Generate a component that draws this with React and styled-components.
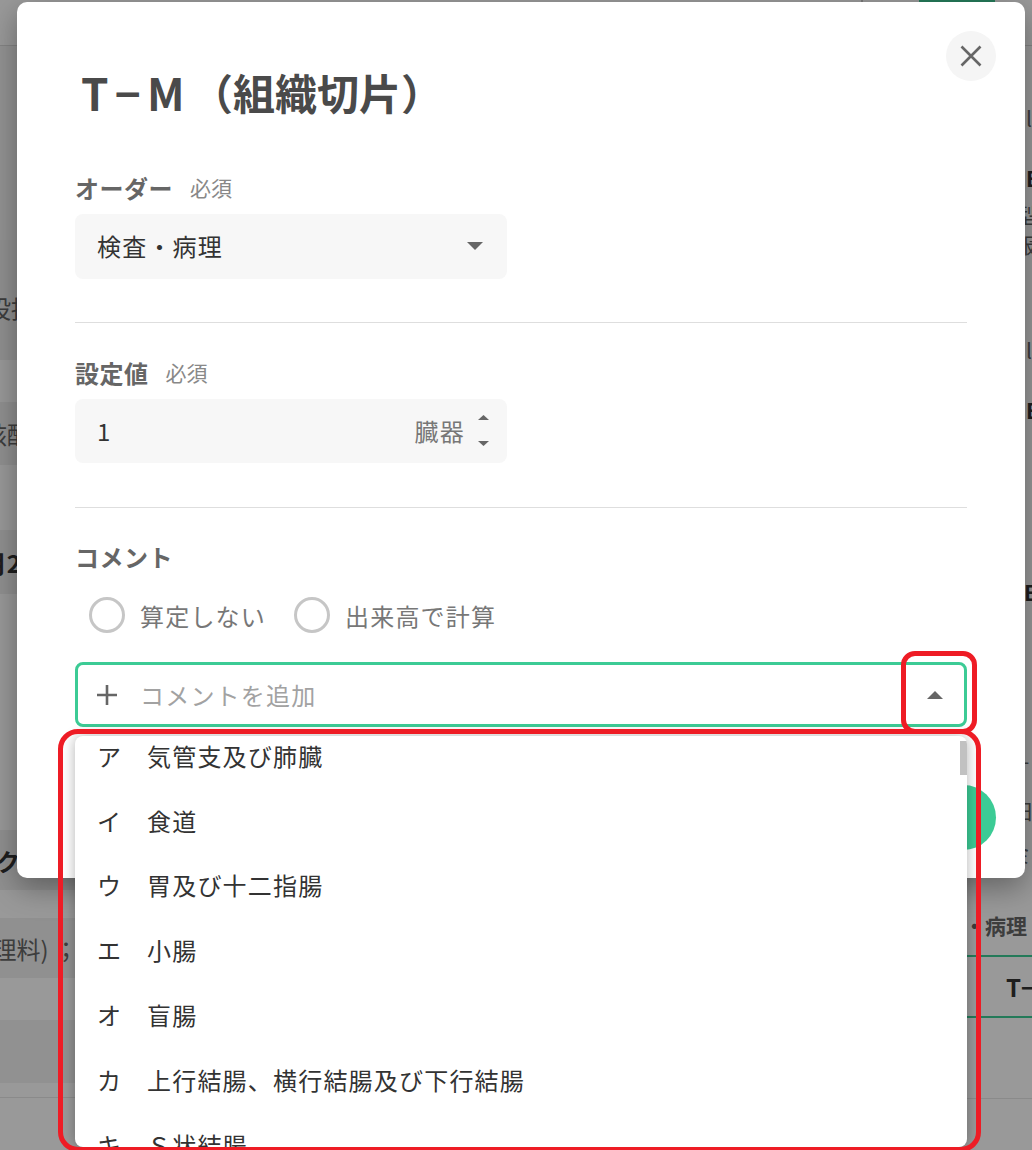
import styled, { createGlobalStyle } from "styled-components";

const GlobalStyle = createGlobalStyle`
    html, body {
        margin: 0;
        height: 1150px;
        overflow: hidden;
        background: #fff;
        font-family: "Noto Sans CJK JP", "Noto Sans", sans-serif;
        color: #333;
    }
    * { box-sizing: border-box; }
`;

const Page = styled.div`
    position: relative;
    width: 1032px;
    height: 1150px;
    overflow: hidden;
`;

const TopBar = styled.div`
    display: flex;
    justify-content: flex-end;
    height: 46px;
    border-bottom: 1px solid #dcdcdc;
`;
const TopLine = styled.div`
    width: 2px;
    height: 3px;
    margin-right: 56px;
    background: #c8c8c8;
`;
const TopTab = styled.div`
    width: 76px;
    height: 3px;
    margin-right: 37px;
    background: #3ccb95;
`;

const Columns = styled.div`
    display: flex;
    justify-content: space-between;
`;
const Column = styled.div`
    width: ${({ $width }) => $width}px;
    overflow: hidden;
`;
const Band = styled.div`
    display: flex;
    align-items: center;
    justify-content: ${({ $side }) => ($side === "right" ? "flex-start" : "flex-end")};
    height: ${({ $h }) => $h}px;
    background: ${({ $tone }) => $tone ?? "#fff"};
    border-bottom: ${({ $line }) => ($line ? "1px solid #e6e6e6" : "none")};
    font-size: ${({ $size }) => $size ?? 21}px;
    font-weight: ${({ $bold }) => ($bold ? 700 : 400)};
    color: ${({ $bold }) => ($bold ? "#333" : "#666")};
    white-space: nowrap;
    overflow: hidden;
`;
const LeftCell = styled.span`
    display: flex;
    justify-content: flex-end;
    flex: none;
    width: ${({ $cell }) => $cell}px;
    margin-right: auto;
    overflow: hidden;
`;
const RightFragment = styled.span`
    margin-left: ${({ $x }) => $x}px;
`;
const GreenCell = styled(Band)`
    border-top: 2px solid #3ccb95;
    border-bottom: 2px solid #3ccb95;
    padding-left: 39px;
    justify-content: flex-start;
`;

const Overlay = styled.div`
    position: absolute;
    inset: 0;
    background: rgba(0, 0, 0, 0.4);
`;

const Modal = styled.div`
    position: absolute;
    left: 17px;
    top: 2px;
    width: 1008px;
    height: 876px;
    padding: 62px 58px 28px;
    background: #fff;
    border-radius: 10px;
    box-shadow: 0 10px 30px rgba(0, 0, 0, 0.35);
`;
const CloseButton = styled.button`
    position: absolute;
    top: 29px;
    right: 29px;
    display: flex;
    align-items: center;
    justify-content: center;
    width: 50px;
    height: 50px;
    padding: 0;
    border: 0;
    border-radius: 50%;
    background: #f5f5f5;
`;
const Title = styled.h1`
    display: flex;
    align-items: center;
    height: 56px;
    margin: 0 0 53px 6px;
    font-size: 42px;
    line-height: 56px;
    font-weight: 700;
    color: #4a4a4a;
    white-space: nowrap;
`;
const TitleCode = styled.span`
    font-size: 44px;
    letter-spacing: 6.3px;
`;
const Label = styled.div`
    display: flex;
    align-items: center;
    gap: 17px;
    height: 30px;
    padding-bottom: 2px;
    margin-bottom: ${({ $mb }) => $mb ?? 11}px;
    font-size: 24px;
    font-weight: 700;
    letter-spacing: 0.5px;
    color: #666;
`;
const Required = styled.span`
    font-size: 21px;
    font-weight: 400;
    letter-spacing: 0;
    color: #888;
`;
const Field = styled.div`
    display: flex;
    align-items: center;
    justify-content: space-between;
    width: 432px;
    height: ${({ $h }) => $h}px;
    padding: 0 ${({ $pr }) => $pr}px 2px 22px;
    background: #f7f7f7;
    border-radius: 8px;
    font-size: 24px;
    letter-spacing: 1.2px;
    color: #333;
`;
const Unit = styled.div`
    display: flex;
    align-items: center;
    gap: 13px;
    color: #777;
`;
const Spinner = styled.div`
    display: flex;
    flex-direction: column;
    gap: 21px;
`;
const Divider = styled.hr`
    height: 1px;
    margin: ${({ $mt }) => $mt}px 0 ${({ $mb }) => $mb}px;
    border: 0;
    background: #dedede;
`;
const RadioGroup = styled.div`
    display: flex;
    gap: 28px;
    height: 36px;
    margin: 25px 0 29px 14px;
`;
const RadioItem = styled.label`
    display: flex;
    align-items: center;
    gap: 15px;
    font-size: 24px;
    letter-spacing: 1.2px;
    color: #777;
`;
const RadioCircle = styled.span`
    width: 36px;
    height: 36px;
    border: 3px solid #c6c6c6;
    border-radius: 50%;
`;
const CommentWrap = styled.div`
    position: relative;
`;
const CommentInput = styled.div`
    display: flex;
    align-items: center;
    height: 65px;
    padding: 0 21px 0 19px;
    border: 3px solid #3ccb95;
    border-radius: 8px;
    font-size: 24px;
    letter-spacing: 1.2px;
    color: #a2a2a2;
`;
const Placeholder = styled.span`
    flex: 1;
    margin-left: 23px;
`;
const Dropdown = styled.div`
    position: absolute;
    top: 74px;
    left: 0;
    width: 892px;
    height: 411px;
    overflow: hidden;
    background: #fff;
    border-radius: 8px;
    box-shadow: 0 0 14px rgba(0, 0, 0, 0.3);
    z-index: 2;
`;
const OptionList = styled.ul`
    margin: -13px 0 0;
    padding: 0;
    list-style: none;
`;
const Option = styled.li`
    display: flex;
    align-items: center;
    height: 64.8px;
    padding-left: 22px;
    font-size: 24px;
    letter-spacing: 1.2px;
    color: #333;
`;
const OptionKey = styled.span`
    width: 50px;
`;
const Scrollbar = styled.div`
    position: absolute;
    top: 5px;
    right: 0;
    width: 7px;
    height: 34px;
    background: #c1c1c1;
`;
const Footer = styled.div`
    display: flex;
    justify-content: flex-end;
    margin: 58px -29px 0 0;
`;
const SaveButton = styled.div`
    width: 200px;
    height: 65px;
    border-radius: 33px;
    background: #3ccb95;
`;

const Marker = styled.div`
    position: absolute;
    left: ${({ $x }) => $x}px;
    top: ${({ $y }) => $y}px;
    width: ${({ $w }) => $w}px;
    height: ${({ $h }) => $h}px;
    border: 5px solid #ee1c25;
    border-radius: ${({ $r }) => $r}px;
    z-index: 3;
`;

const Caret = ({ up, w = 16, h = 8 }) => (
    <svg width={w} height={h} viewBox="0 0 16 8" preserveAspectRatio="none" style={{ display: "block" }}>
        <path d={up ? "M0 8L8 0L16 8Z" : "M0 0L8 8L16 0Z"} fill="#666" />
    </svg>
);

const leftBands = [
    { h: 194, tone: "#f6f6f6" },
    { h: 35, tone: "#f0f0f0" },
    { h: 64, tone: "#f0f0f0", text: "投接", cell: 35 },
    { h: 21, tone: "#f0f0f0" },
    { h: 42 },
    { h: 63, tone: "#f0f0f0", text: "核酸", cell: 31 },
    { h: 65 },
    { h: 64, tone: "#f0f0f0", text: "月2", cell: 21, bold: true },
    { h: 236 },
    { h: 60, tone: "#f0f0f0", text: "ク", cell: 20, bold: true },
    { h: 28 },
    { h: 60, tone: "#f0f0f0", text: "理料) ；", cell: 78 },
    { h: 42 },
    { h: 63, tone: "#f2f2f2" },
    { h: 15, line: true },
    { h: 51 },
];

const rightBands = [
    { h: 62 },
    { h: 20, text: "l", x: 1 },
    { h: 40 },
    { h: 20, text: "E", x: 1, bold: true },
    { h: 14 },
    { h: 24, text: "型", x: -10 },
    { h: 6 },
    { h: 24, text: "服", x: -10 },
    { h: 84 },
    { h: 20, text: "l", x: 1 },
    { h: 40 },
    { h: 20, text: "E", x: 1, bold: true },
    { h: 162 },
    { h: 20, text: "E", x: -1, bold: true },
    { h: 148 },
    { h: 20, text: "-", x: -3 },
    { h: 28 },
    { h: 24, text: "日", x: -12 },
    { h: 20 },
    { h: 24, text: "ミ", x: -14 },
    { h: 38 },
];

const options = [
    ["ア", "気管支及び肺臓"],
    ["イ", "食道"],
    ["ウ", "胃及び十二指腸"],
    ["エ", "小腸"],
    ["オ", "盲腸"],
    ["カ", "上行結腸、横行結腸及び下行結腸"],
    ["キ", "Ｓ状結腸"],
];

export default function App() {
    return (
        <Page>
            <GlobalStyle />
            <TopBar>
                <TopLine />
                <TopTab />
            </TopBar>
            <Columns>
                <Column $width={90}>
                    {leftBands.map((b, i) => (
                        <Band key={i} $h={b.h} $tone={b.tone} $line={b.line} $bold={b.bold} $size={24}>
                            {b.text && <LeftCell $cell={b.cell}>{b.text}</LeftCell>}
                        </Band>
                    ))}
                </Column>
                <Column $width={65}>
                    {rightBands.map((b, i) => (
                        <Band key={i} $side="right" $h={b.h} $bold={b.bold}>
                            {b.text && <RightFragment $x={58 + b.x}>{b.text}</RightFragment>}
                        </Band>
                    ))}
                    <Band $side="right" $h={42} $bold style={{ color: "#666" }}>
                        <RightFragment $x={-3}>・病理</RightFragment>
                    </Band>
                    <Band $h={9} />
                    <GreenCell $h={63} $bold $size={24}>T−M</GreenCell>
                    <Band $h={81} $line />
                </Column>
            </Columns>
            <Overlay />
            <Modal>
                <CloseButton aria-label="閉じる">
                    <svg width="24" height="24" viewBox="0 0 24 24">
                        <path d="M2.5 2.5L21.5 21.5M21.5 2.5L2.5 21.5" stroke="#666" strokeWidth="2.6" fill="none" />
                    </svg>
                </CloseButton>
                <Title><TitleCode>T−M</TitleCode>（組織切片）</Title>
                <Label>オーダー<Required>必須</Required></Label>
                <Field $h={65} $pr={24}>
                    検査・病理
                    <Caret />
                </Field>
                <Divider $mt={43} $mb={35} />
                <Label>設定値<Required>必須</Required></Label>
                <Field $h={64} $pr={18}>
                    1
                    <Unit>
                        臓器
                        <Spinner>
                            <Caret up w={11} h={5} />
                            <Caret w={11} h={5} />
                        </Spinner>
                    </Unit>
                </Field>
                <Divider $mt={44} $mb={34} />
                <Label $mb={0}>コメント</Label>
                <RadioGroup>
                    <RadioItem><RadioCircle />算定しない</RadioItem>
                    <RadioItem><RadioCircle />出来高で計算</RadioItem>
                </RadioGroup>
                <CommentWrap>
                    <CommentInput>
                        <svg width="20" height="20" viewBox="0 0 20 20">
                            <path d="M10 0V20M0 10H20" stroke="#666" strokeWidth="2.6" fill="none" />
                        </svg>
                        <Placeholder>コメントを追加</Placeholder>
                        <Caret up />
                    </CommentInput>
                    <Dropdown>
                        <OptionList>
                            {options.map(([key, name]) => (
                                <Option key={key}>
                                    <OptionKey>{key}</OptionKey>
                                    {name}
                                </Option>
                            ))}
                        </OptionList>
                        <Scrollbar />
                    </Dropdown>
                </CommentWrap>
                <Footer>
                    <SaveButton />
                </Footer>
            </Modal>
            <Marker $x={901} $y={651} $w={76} $h={83} $r={14} />
            <Marker $x={58} $y={729} $w={923} $h={423} $r={20} />
        </Page>
    );
}
